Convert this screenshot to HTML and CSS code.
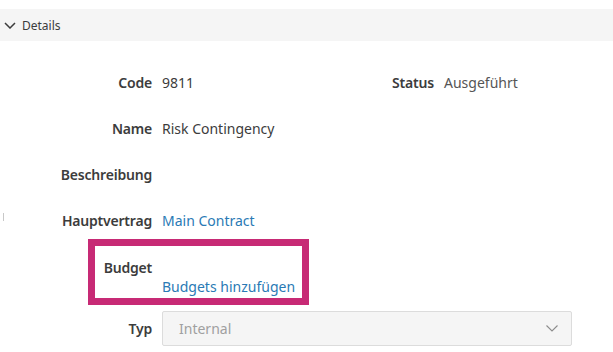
FILE: index.html
```html
<!DOCTYPE html>
<html>

<head>
    <meta charset="UTF-8">
    <title>Details</title>
    <link rel="stylesheet" href="styles.css">
</head>

<body>
    <!-- Kopfzeile des Abschnitts -->
    <div class="section-header">
        <svg class="chevron" width="12" height="7" viewBox="0 0 12 7">
            <path d="M1 1 L6 6 L11 1" fill="none" stroke="#3c3c3c" stroke-width="1.5" />
        </svg>
        <span>Details</span>
    </div>

    <span class="edge-mark"></span>

    <div class="details">
        <div class="row row-pair">
            <div class="field">
                <span class="label">Code</span>
                <span class="value">9811</span>
            </div>
            <div class="field">
                <span class="label">Status</span>
                <span class="value muted">Ausgeführt</span>
            </div>
        </div>

        <div class="row field">
            <span class="label">Name</span>
            <span class="value">Risk Contingency</span>
        </div>

        <div class="row field">
            <span class="label">Beschreibung</span>
            <span class="value"></span>
        </div>

        <div class="row field">
            <span class="label">Hauptvertrag</span>
            <a class="value link" href="#">Main Contract</a>
        </div>

        <!-- Markiertes Budget-Feld -->
        <div class="budget-box">
            <span class="label">Budget</span>
            <a class="link budget-link" href="#">Budgets hinzufügen</a>
        </div>

        <div class="field typ-row">
            <span class="label">Typ</span>
            <div class="select">
                <span>Internal</span>
                <svg width="12" height="7" viewBox="0 0 12 7">
                    <path d="M0.5 0.5 L6 6 L11.5 0.5" fill="none" stroke="#8c8c8c" stroke-width="1.1" />
                </svg>
            </div>
        </div>
    </div>
</body>

</html>
```

FILE: styles.css
```css
* {
    box-sizing: border-box;
}

body {
    margin: 0;
    font-family: "Noto Sans", Arial, sans-serif;
    font-size: 14px;
    color: #3c3c3c;
    background: #fff;
    position: relative;
}

.section-header {
    margin-top: 9px;
    height: 32px;
    background-color: #f5f5f5;
    display: flex;
    align-items: center;
    padding-left: 4px;
    font-size: 12px;
    color: #3c3c3c;
}

.chevron {
    margin-right: 6px;
}

.edge-mark {
    position: absolute;
    left: 3px;
    top: 213px;
    width: 1px;
    height: 8px;
    background: #c8c8c8;
}

.details {
    padding-top: 32px;
}

.row {
    height: 20px;
    line-height: 20px;
    margin-bottom: 26px;
}

.row-pair {
    display: flex;
}

.row-pair .field {
    width: 282px;
}

.field {
    display: grid;
    grid-template-columns: 152px 1fr;
    column-gap: 10px;
    align-items: center;
}

.label {
    font-weight: 600;
    text-align: right;
    letter-spacing: -0.2px;
    color: #3c3c3c;
}

.value {
    color: #3c3c3c;
}

.muted {
    color: #555;
}

.link {
    color: #2a7ab5;
    text-decoration: none;
}

.budget-box {
    margin-top: -18px;
    margin-left: 88px;
    width: 221px;
    border: 7px solid #c72a75;
    padding: 12px 0 2px 0;
    display: grid;
    grid-template-columns: 57px 1fr;
    column-gap: 10px;
    line-height: 19px;
}

.budget-box .label {
    grid-row: 1;
    grid-column: 1;
}

.budget-link {
    grid-row: 2;
    grid-column: 2;
    white-space: nowrap;
}

.typ-row {
    margin-top: 6px;
}

.select {
    width: 410px;
    height: 35px;
    background-color: #f5f5f5;
    border: 1px solid #dcdcdc;
    border-radius: 2px;
    display: flex;
    align-items: center;
    justify-content: space-between;
    padding: 0 13px 0 16px;
    color: #a0a0a0;
}
```
